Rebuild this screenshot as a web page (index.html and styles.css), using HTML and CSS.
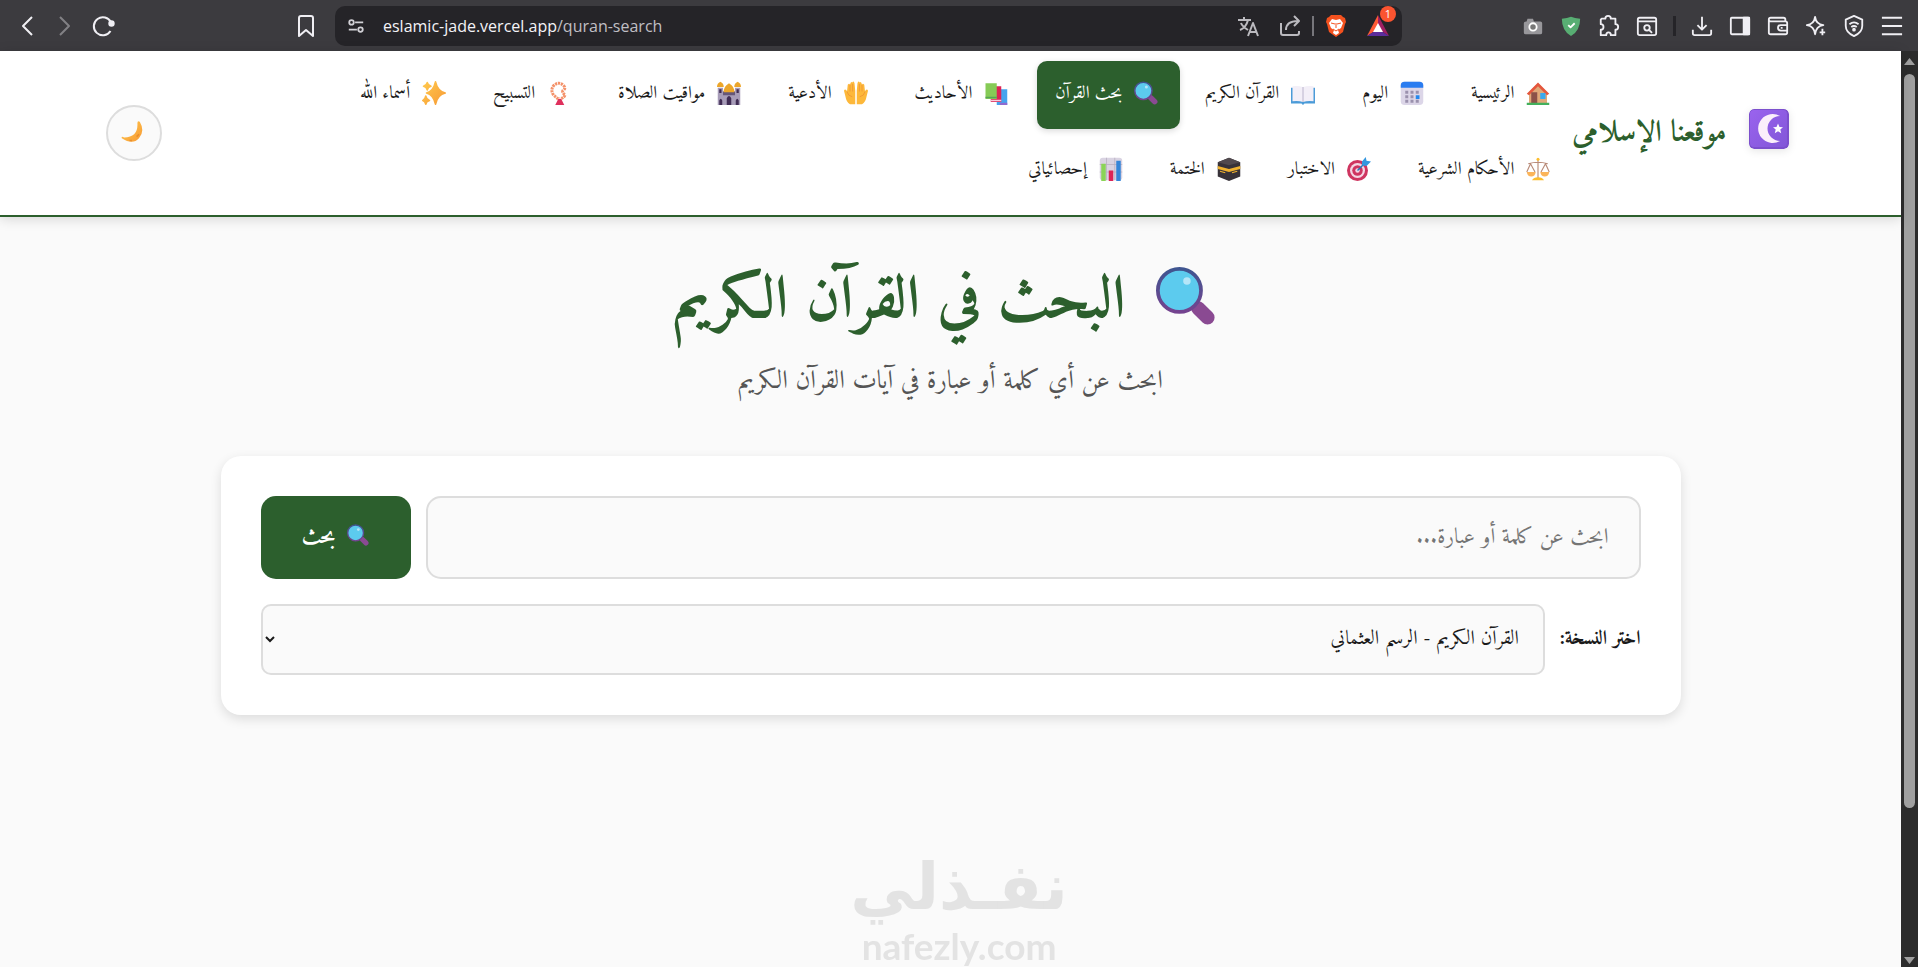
FILE: index.html
```html
<!DOCTYPE html>
<html lang="ar" dir="rtl">
<head>
    <meta charset="UTF-8">
    <meta name="viewport" content="width=device-width, initial-scale=1.0">
    <title>موقعنا الإسلامي</title>
    <link rel="stylesheet" href="styles.css">
</head>
<body>
    <!-- Shared icons -->
    <svg class="sprite" aria-hidden="true">
        <defs>
            <linearGradient id="handle" x1="0" y1="0" x2="1" y2="1"><stop offset="0" stop-color="#6b3a86"/><stop offset="1" stop-color="#a4559c"/></linearGradient>
            <linearGradient id="rim" x1="0" y1="0" x2="0" y2="1"><stop offset="0" stop-color="#3f5590"/><stop offset="1" stop-color="#74438f"/></linearGradient>
            <linearGradient id="gold" x1="0" y1="0" x2="1" y2="1"><stop offset="0" stop-color="#ffc94d"/><stop offset="1" stop-color="#f79a35"/></linearGradient>
            <linearGradient id="violet" x1="0" y1="0" x2="1" y2="1"><stop offset="0" stop-color="#9a63ee"/><stop offset="1" stop-color="#8257d8"/></linearGradient>
        </defs>
        <symbol id="icon-search" viewBox="0 0 32 32">
            <path d="M20 20l3 3" stroke="#5a3f86" stroke-width="3"/>
            <path d="M22.500 22.500l5 5" stroke="#8a4a92" stroke-width="7.500" stroke-linecap="round"/>
            <circle cx="12.500" cy="13" r="11.500" fill="#5ccbee" stroke="url(#rim)" stroke-width="2"/>
            <circle cx="16.500" cy="8" r="2" fill="#b5e6f8"/>
        </symbol>
    </svg>

    <div class="toolbar" dir="ltr">
        <div class="toolbar-start">
            <button class="tool" aria-label="Back"><svg viewBox="0 0 24 24"><path d="M17 3L8 12l9 9"/></svg></button>
            <button class="tool tool-off" aria-label="Forward"><svg viewBox="0 0 24 24"><path d="M7 3l9 9-9 9"/></svg></button>
            <button class="tool" aria-label="Reload"><svg viewBox="0 0 24 24"><path d="M19.500 17A9 9 0 1 1 20 8.500"/><circle cx="20.500" cy="9.500" r="2.200" fill="#f0eff4"/></svg></button>
            <button class="tool bookmark" aria-label="Bookmark"><svg viewBox="0 0 24 24"><path d="M5 4a2 2 0 0 1 2-2h10a2 2 0 0 1 2 2v18l-7-6-7 6z"/></svg></button>
        </div>
        <div class="address">
            <svg class="address-icon" viewBox="0 0 20 20"><circle cx="5" cy="6" r="2.500"/><path d="M9 6h9M2 14h9"/><circle cx="15" cy="14" r="2.500"/></svg>
            <span class="url">eslamic-jade.vercel.app<span class="url-path">/quran-search</span></span>
            <div class="address-tools">
                <button class="tool tool-soft" aria-label="Translate"><svg viewBox="0 0 24 24"><path d="M2 6h13M8 3v3M4 16c5-2 7-6 8-10M5 9c1 3 4 5 7 7M12 22l5-13 5 13M14 18h6"/></svg></button>
                <button class="tool tool-soft" aria-label="Share"><svg viewBox="0 0 24 24"><path d="M3 9v10a2 2 0 0 0 2 2h14a2 2 0 0 0 2-2v-2M8 16c0-6 4-9 12-9M16 2l5 5-5 5"/></svg></button>
                <span class="address-line"></span>
                <button class="tool brave" aria-label="Brave Shields">
                    <svg viewBox="0 0 24 24"><path d="M7 1h10l2 2 2 1 1 4-1 2-2 8-7 5-7-5-2-8-1-2 1-4 2-1z" fill="#f4511e" stroke="none"/><path d="M8 5l4 1 4-1 3 4-2 5-3 2 1 3-3 2-3-2 1-3-3-2-2-5z" fill="#fff" stroke="none"/><path d="M7 9l4 1M17 9l-4 1M12 9v5M9 15l3 2 3-2" stroke="#f4511e" stroke-width="1"/></svg>
                </button>
                <button class="tool rewards" aria-label="Rewards">
                    <svg viewBox="0 0 24 24"><g stroke="none"><path d="M12 1L1 22l11-7z" fill="#ff5a35"/><path d="M12 1l11 21-11-7z" fill="#9e1f63"/><path d="M1 22h22l-11-7z" fill="#5b2d9c"/><path d="M12 9l5 9H7z" fill="#fff"/></g></svg>
                    <span class="badge">1</span>
                </button>
            </div>
        </div>
        <div class="toolbar-end">
            <button class="tool" aria-label="Capture"><svg viewBox="0 0 24 24"><path d="M2 9q0-2 3-2l1-3h6l1 3h7q2 0 2 2v10q0 2-2 2H4q-2 0-2-2z" fill="#98979b" stroke="none"/><circle cx="12" cy="13" r="4" fill="#777" stroke="#fff" stroke-width="2"/></svg></button>
            <button class="tool" aria-label="Protection"><svg viewBox="0 0 24 24"><path d="M2 4q6 0 10-2 4 2 10 2 0 13-10 19Q2 17 2 4z" fill="#58ae73" stroke="none"/><path d="M9 11l2.500 2.500L16 9" stroke="#fff" stroke-width="2"/></svg></button>
            <button class="tool" aria-label="Extensions"><svg viewBox="0 0 24 24"><path d="M4 4h4c0-4 6-4 6 0h5v6c4 0 4 6 0 6v6h-5c0-4-5-4-5 0H3v-6c4 0 4-6 0-6V5z"/></svg></button>
            <button class="tool" aria-label="Find in page"><svg viewBox="0 0 24 24"><rect x="2" y="3" width="20" height="19" rx="2"/><path d="M2 7h20M14.500 16.500l3 3"/><circle cx="12" cy="14" r="3"/></svg></button>
            <span class="toolbar-line"></span>
            <button class="tool" aria-label="Downloads"><svg viewBox="0 0 24 24"><path d="M12 2v14M7 11l5 5 5-5M2 16v4a2 2 0 0 0 2 2h16a2 2 0 0 0 2-2v-4"/></svg></button>
            <button class="tool" aria-label="Sidebar"><svg viewBox="0 0 24 24"><rect x="2" y="3" width="20" height="18" rx="1"/><path d="M16 3h6v18h-6z" fill="#f0eff4"/></svg></button>
            <button class="tool" aria-label="Wallet"><svg viewBox="0 0 24 24"><path d="M20 7V5a2 2 0 0 0-2-2H4a2 2 0 0 0 0 4h16a2 2 0 0 1 2 2v10a2 2 0 0 1-2 2H4a2 2 0 0 1-2-2V5M22 11h-7a3 3 0 0 0 0 6h7M15 14h2"/></svg></button>
            <button class="tool" aria-label="Assistant"><svg viewBox="0 0 24 24"><path d="M11 2q1 8 9 9-8 1-9 10-1-9-9-10 8-1 9-9zM19 15v7M16 19h6"/></svg></button>
            <button class="tool" aria-label="VPN"><svg viewBox="0 0 24 24"><path d="M12 1l9 4v7q0 7-9 11-9-4-9-11V5zM7 10q5-4 10 0M9 13q3-2 6 0"/><circle cx="12" cy="16" r="1" fill="#f0eff4"/></svg></button>
            <button class="tool" aria-label="Menu"><svg viewBox="0 0 24 24"><path d="M1 3h22M1 12h22M1 21h22"/></svg></button>
        </div>
    </div>

    <div class="viewport">
        <div class="page">
            <header class="header">
                <div class="header-inner">
                    <a href="#" class="logo">
                        <svg class="logo-icon" viewBox="0 0 40 40"><rect width="40" height="40" rx="5" fill="#7c50cd"/><rect x="1" y="1" width="37" height="37" rx="4" fill="url(#violet)"/><path d="M31 7A14.500 14.500 0 1 0 31 32A12.500 12.500 0 1 1 31 7z" fill="#fbeffb"/><path d="M29 14.500l1.500 3.500 3.500.2-2.700 2.400.9 3.600-3.200-2-3.200 2 .9-3.600-2.700-2.400 3.500-.2z" fill="#fff"/></svg>
                        <span class="logo-text">موقعنا الإسلامي</span>
                    </a>
                    <nav class="nav">
                        <a href="#" class="nav-link">
                            <svg viewBox="0 0 32 32"><path d="M4 15L16 3l12 12v15H4z" fill="#e0a878"/><path d="M16 2L1 17l3 2L16 7l12 12 3-2z" fill="#e4573d"/><path d="M7 15h8v15H7z" fill="#8c5148"/><path d="M19 16h7v8h-7z" fill="#3aa9ee"/><path d="M1 29h30v3H1z" fill="#43b05c"/></svg>
                            <span>الرئيسية</span>
                        </a>
                        <a href="#" class="nav-link">
                            <svg viewBox="0 0 32 32"><rect x="1" y="1" width="30" height="31" rx="5" fill="#dcd6e8"/><path d="M1 9V6q0-5 5-5h20q5 0 5 5v3z" fill="#2a7cf0"/><g fill="#9a91ad"><path d="M7 13h4v4H7zM14 13h4v4h-4zM21 13h4v4h-4zM7 19h4v4H7zM14 19h4v4h-4zM7 25h4v4H7zM14 25h4v4h-4zM21 25h4v4h-4z"/></g><path d="M21 19h5v5h-5z" fill="#2588ee"/></svg>
                            <span>اليوم</span>
                        </a>
                        <a href="#" class="nav-link">
                            <svg viewBox="0 0 32 32"><path d="M0 9h32v21H18l-2 2-2-2H0z" fill="#4b9bd8"/><path d="M2 7q8-1 14 1 6-2 14-1v20q-8-1-14 1-6-2-14-1z" fill="#f3eff8"/><path d="M16 8v20" stroke="#aaa2bd"/></svg>
                            <span>القرآن الكريم</span>
                        </a>
                        <a href="#" class="nav-link active">
                            <svg><use href="#icon-search"/></svg>
                            <span>بحث القرآن</span>
                        </a>
                        <a href="#" class="nav-link">
                            <svg viewBox="0 0 32 32"><path d="M17 11h14v21H17z" fill="#45a4ee"/><path d="M21 29h10v3H21z" fill="#8f6bd0"/><path d="M9 7h14v21H9z" fill="#dc2456"/><path d="M9 25h14v2H9z" fill="#f7cddd"/><path d="M2 3h15v21H2z" fill="#86cb56"/><path d="M2 21h15v2H2z" fill="#55a557"/></svg>
                            <span>الأحاديث</span>
                        </a>
                        <a href="#" class="nav-link">
                            <svg viewBox="0 0 32 32"><path d="M15 31H8Q3 28 2 21L0 13q1-3 3-1l1 2 1-9q2-3 3 0 1-5 3-3 2-3 3 1l1 10z" fill="#fdb83a"/><path d="M17 31h7q5-3 6-10l2-8q-1-3-3-1l-1 2-1-9q-2-3-3 0-1-5-3-3-2-3-3 1l-1 10z" fill="#fdb83a"/><path d="M8 5v9M11.500 4v10M24 5v9M20.500 4v10M4 14q1 6 7 7M28 14q-1 6-7 7" fill="none" stroke="#ee9136"/></svg>
                            <span>الأدعية</span>
                        </a>
                        <a href="#" class="nav-link">
                            <svg viewBox="0 0 32 32"><path d="M1 9h7v5h16V9h7v23H1z" fill="#a79cb8"/><path d="M8 14h16v5H8z" fill="#665779"/><path d="M0 8q0-5 4.500-7Q9 3 9 8zM23 8q0-5 4.500-7Q32 3 32 8zM9 15q-1-7 7-12 8 5 7 12z" fill="#eca62a"/><path d="M3 11h3v5H3zM26 11h3v5h-3zM3 32v-6q2-5 4 0v6zM13 32v-9q3-6 6 0v9zM25 32v-6q2-5 4 0v6z" fill="#402c54"/></svg>
                            <span>مواقيت الصلاة</span>
                        </a>
                        <a href="#" class="nav-link">
                            <svg viewBox="0 0 32 32"><path d="M15 24l-6-5q-5-7 0-13 7-6 13 0 4 4-1 7-1 3 3 5 0 4-7 6" fill="none" stroke="#f4926a" stroke-width="4" stroke-dasharray="3 1"/><path d="M15 24h4l4 8H11z" fill="#df305d"/></svg>
                            <span>التسبيح</span>
                        </a>
                        <a href="#" class="nav-link">
                            <svg viewBox="0 0 32 32"><path d="M18 1q3 13 13 15-10 2-13 15Q15 18 6 16 15 14 18 1zM7 2q1 4 5 5-4 1-5 5-1-4-5-5 4-1 5-5zM5 20q1 5 5 6-4 1-5 5-1-4-4-5 3-1 4-6z" fill="url(#gold)" stroke="url(#gold)" stroke-width="2" stroke-linejoin="round"/></svg>
                            <span>أسماء الله</span>
                        </a>
                        <a href="#" class="nav-link">
                            <svg viewBox="0 0 32 32"><path d="M16 3v25M3 9q13-4 26 0M6 9L1 20M6 9l6 11M26 9l-6 11M26 9l5 11" fill="none" stroke="#b88a78" stroke-width="1.500"/><path d="M1 20h12q-1 6-6 6t-6-6zM19 20h12q-1 6-6 6t-6-6z" fill="#fbb45a"/><path d="M8 31q2-4 8-4t8 4z" fill="#fcbd2e"/><circle cx="16" cy="3" r="2" fill="#fcbd2e"/></svg>
                            <span>الأحكام الشرعية</span>
                        </a>
                        <a href="#" class="nav-link">
                            <svg viewBox="0 0 32 32"><circle cx="14" cy="18" r="14" fill="#cf3560"/><circle cx="14" cy="18" r="10" fill="#f4d6e4"/><circle cx="14" cy="18" r="7" fill="#cf3560"/><circle cx="14" cy="18" r="3" fill="#f4d6e4"/><path d="M14 18L25 7" stroke="#2376ba" stroke-width="2"/><path d="M20 11V6l5-6 1 5 6 1-6 6z" fill="#3497df"/></svg>
                            <span>الاختبار</span>
                        </a>
                        <a href="#" class="nav-link">
                            <svg viewBox="0 0 32 32"><path d="M1 7l15-6 15 6v19l-15 6-15-6z" fill="#373239"/><path d="M1 7l15-6 15 6-15 4z" fill="#51494e"/><path d="M1 12l15 4 15-4v4l-15 4-15-4z" fill="#efb12f"/><path d="M4 19l7 2M20 21l7-2" stroke="#efb12f" stroke-width="1.500"/></svg>
                            <span>الختمة</span>
                        </a>
                        <a href="#" class="nav-link">
                            <svg viewBox="0 0 32 32"><rect x="1" y="1" width="30" height="30" rx="4" fill="#d9d3e2"/><path d="M10 1v30M21 1v30M1 10h30M1 20h30" stroke="#b5adbf"/><path d="M3 9h6v23H3z" fill="#8ad457"/><path d="M13 18h6v14h-6z" fill="#dc2456"/><path d="M23 5h6v27h-6z" fill="#3585d8"/></svg>
                            <span>إحصائياتي</span>
                        </a>
                    </nav>
                    <button class="theme-toggle" aria-label="الوضع الليلي">
                        <svg viewBox="0 0 32 32"><path d="M24 1q7 12-1 21T1 22q-1-3 3-1 18 0 17-18 0-4 3-2z" fill="url(#gold)"/><path d="M20 20l3-3M11 25h3" stroke="#e98e2e" stroke-width="2"/></svg>
                    </button>
                </div>
            </header>

            <main class="container">
                <h1 class="title"><svg class="title-icon"><use href="#icon-search"/></svg><span>البحث في القرآن الكريم</span></h1>
                <p class="subtitle">ابحث عن أي كلمة أو عبارة في آيات القرآن الكريم</p>

                <form class="search-card">
                    <div class="search-row">
                        <input type="text" class="search-input" aria-label="بحث" placeholder="ابحث عن كلمة أو عبارة...">
                        <button type="button" class="search-button"><svg><use href="#icon-search"/></svg><span>بحث</span></button>
                    </div>
                    <div class="edition-row">
                        <label for="edition">اختر النسخة:</label>
                        <select id="edition" class="edition-select">
                            <option>القرآن الكريم - الرسم العثماني</option>
                        </select>
                    </div>
                </form>
            </main>
        </div>
        <div class="scrollbar">
            <svg class="scroll-arrow" viewBox="0 0 13 9"><path d="M6.500 1L12 8H1z"/></svg>
            <div class="scroll-track"><div class="scroll-thumb"></div></div>
            <svg class="scroll-arrow" viewBox="0 0 13 9"><path d="M6.500 8L1 1h11z"/></svg>
        </div>
    </div>

    <div class="watermark">
        <span class="watermark-ar">نفـذلي</span>
        <span class="watermark-en" dir="ltr">nafezly.com</span>
    </div>
</body>
</html>
```
FILE: styles.css
```css
* {
    box-sizing: border-box;
}

html, body {
    margin: 0;
    padding: 0;
    height: 100%;
}

body {
    display: flex;
    flex-direction: column;
    overflow: hidden;
    font-family: "Amiri", "DejaVu Sans Condensed", "DejaVu Sans", sans-serif;
    background-color: #2c2c2c;
    color: #1a1a1a;
}

button, input, select {
    font-family: inherit;
}

button {
    padding: 0;
    border: none;
    background: none;
    cursor: pointer;
}

.sprite {
    position: absolute;
    width: 0;
    height: 0;
}

/* Browser toolbar */
.toolbar {
    display: flex;
    align-items: center;
    flex: none;
    height: 51px;
    background-color: #3c3b3f;
}

.toolbar-start {
    display: flex;
    gap: 14px;
    width: 335px;
    padding: 0 17px 0 15px;
}

.toolbar-end {
    display: flex;
    align-items: center;
    justify-content: flex-end;
    gap: 14px;
    width: 516px;
    padding-right: 14px;
}

.tool {
    display: block;
    position: relative;
    width: 24px;
    height: 24px;
}

.tool svg {
    display: block;
    width: 24px;
    height: 24px;
    fill: none;
    stroke: #f0eff4;
    stroke-width: 2;
    stroke-linejoin: round;
}

.toolbar-end .tool svg {
    padding: 1px;
}

.tool-off svg {
    stroke: #828185;
}

.tool-soft svg {
    stroke: #bbbabf;
}

.bookmark {
    margin-left: auto;
}

.address {
    display: flex;
    align-items: center;
    flex: 1;
    height: 40px;
    padding: 0 12px;
    background-color: #252428;
    border-radius: 10px;
}

.address-icon {
    width: 18px;
    height: 20px;
    margin-right: 18px;
    fill: none;
    stroke: #d2d1d6;
    stroke-width: 2;
}

.url {
    font-family: "Open Sans", sans-serif;
    font-size: 16px;
    line-height: 20px;
    color: #f4f3f7;
}

.url-path {
    color: #c0bfc4;
}

.address-tools {
    display: flex;
    align-items: center;
    gap: 18px;
    margin-left: auto;
}

.address-line {
    width: 2px;
    height: 20px;
    margin: 0 -8px;
    background-color: #77767b;
}

.badge {
    position: absolute;
    top: -8px;
    right: -6px;
    width: 16px;
    height: 16px;
    border-radius: 50%;
    background-color: #fb5430;
    color: #fff;
    font-family: "Open Sans", sans-serif;
    font-size: 11px;
    line-height: 16px;
}

.toolbar-line {
    width: 3px;
    height: 20px;
    background-color: #252428;
}

/* Page */
.viewport {
    display: flex;
    flex: 1;
    min-height: 0;
    direction: ltr;
}

.page {
    flex: 1;
    direction: rtl;
    background-color: #fafafa;
}

.header {
    position: relative;
    background-color: #fff;
    border-bottom: 2px solid #2c5f2d;
    box-shadow: 0 2px 12px rgba(0, 0, 0, 0.15);
}

.header-inner {
    display: flex;
    align-items: center;
    max-width: 1750px;
    margin: 0 auto;
    padding: 10px 30px;
}

.logo {
    display: flex;
    align-items: center;
    gap: 22px;
    padding-right: 7px;
    color: #2c5f2d;
    text-decoration: none;
}

.logo-icon {
    width: 40px;
    height: 40px;
    margin-bottom: 8px;
    border-radius: 5px;
    box-shadow: 0 2px 8px rgba(0, 0, 0, 0.1);
}

.logo-text {
    font-size: 30px;
    font-weight: bold;
    white-space: nowrap;
}

.nav {
    display: flex;
    flex-wrap: wrap;
    flex: 1;
    gap: 8px 7px;
    max-width: 1280px;
}

.nav-link {
    display: flex;
    align-items: center;
    gap: 12px;
    height: 68px;
    padding: 0 22px 4px 18px;
    border-radius: 10px;
    color: #1a1a1a;
    font-size: 18px;
    white-space: nowrap;
    text-decoration: none;
}

.nav-link svg {
    width: 24px;
    height: 24px;
}

.nav-link.active {
    background-color: #2c5f2d;
    color: #fff;
    box-shadow: 0 2px 6px rgba(0, 0, 0, 0.15);
}

.theme-toggle {
    display: flex;
    align-items: center;
    justify-content: center;
    width: 56px;
    height: 56px;
    margin-right: auto;
    border: 2px solid #ddd;
    border-radius: 50%;
    background-color: #fafafa;
}

.theme-toggle svg {
    width: 25px;
    height: 25px;
}

.container {
    max-width: 1500px;
    margin: 0 auto;
    padding: 30px 20px;
}

.title {
    display: flex;
    align-items: center;
    justify-content: center;
    gap: 30px;
    margin: 0;
    padding-right: 12px;
    color: #2c5f2d;
    font-size: 60px;
    line-height: 112px;
}

.title-icon {
    width: 60px;
    height: 60px;
    margin-bottom: 14px;
}

.subtitle {
    margin: 0 0 51px;
    color: #555;
    font-size: 26px;
    line-height: 46px;
    text-align: center;
}

.search-card {
    padding: 40px;
    background-color: #fff;
    border-radius: 20px;
    box-shadow: 0 4px 12px rgba(0, 0, 0, 0.12);
}

.search-row {
    display: flex;
    gap: 15px;
    margin-bottom: 25px;
}

.search-input {
    flex: 1;
    height: 83px;
    padding: 0 30px;
    border: 2px solid #ddd;
    border-radius: 15px;
    background-color: #fafafa;
    font-size: 22px;
}

.search-button {
    display: flex;
    align-items: center;
    justify-content: center;
    gap: 12px;
    width: 150px;
    border-radius: 15px;
    background-color: #2c5f2d;
    color: #fff;
    font-size: 22px;
    font-weight: bold;
}

.search-button svg {
    width: 22px;
    height: 22px;
    margin-bottom: 6px;
}

.edition-row {
    display: flex;
    align-items: center;
    gap: 15px;
}

.edition-row label {
    font-size: 20px;
    font-weight: bold;
}

.edition-select {
    flex: 1;
    height: 71px;
    padding: 0 20px;
    border: 2px solid #ddd;
    border-radius: 10px;
    background-color: #fafafa;
    color: #1a1a1a;
    font-size: 20px;
}

/* Scrollbar */
.scrollbar {
    display: flex;
    flex-direction: column;
    align-items: center;
    width: 17px;
    padding: 6px 0 2px;
    background-color: #2c2c2c;
}

.scroll-arrow {
    width: 13px;
    height: 9px;
    fill: #a0a0a0;
}

.scroll-track {
    flex: 1;
    padding: 8px 0;
}

.scroll-thumb {
    width: 11px;
    height: 84%;
    border-radius: 6px;
    background-color: #a0a0a0;
}

/* Site stamp over the bottom of the page */
.watermark {
    position: fixed;
    bottom: 0;
    left: 50%;
    display: flex;
    flex-direction: column;
    align-items: center;
    transform: translateX(-50%);
    color: #e3e3e3;
    font-weight: bold;
}

.watermark-ar {
    font-family: "DejaVu Sans", sans-serif;
    font-size: 64px;
    line-height: 76px;
}

.watermark-en {
    font-family: "Lato", sans-serif;
    font-size: 37px;
    line-height: 42px;
}
```
